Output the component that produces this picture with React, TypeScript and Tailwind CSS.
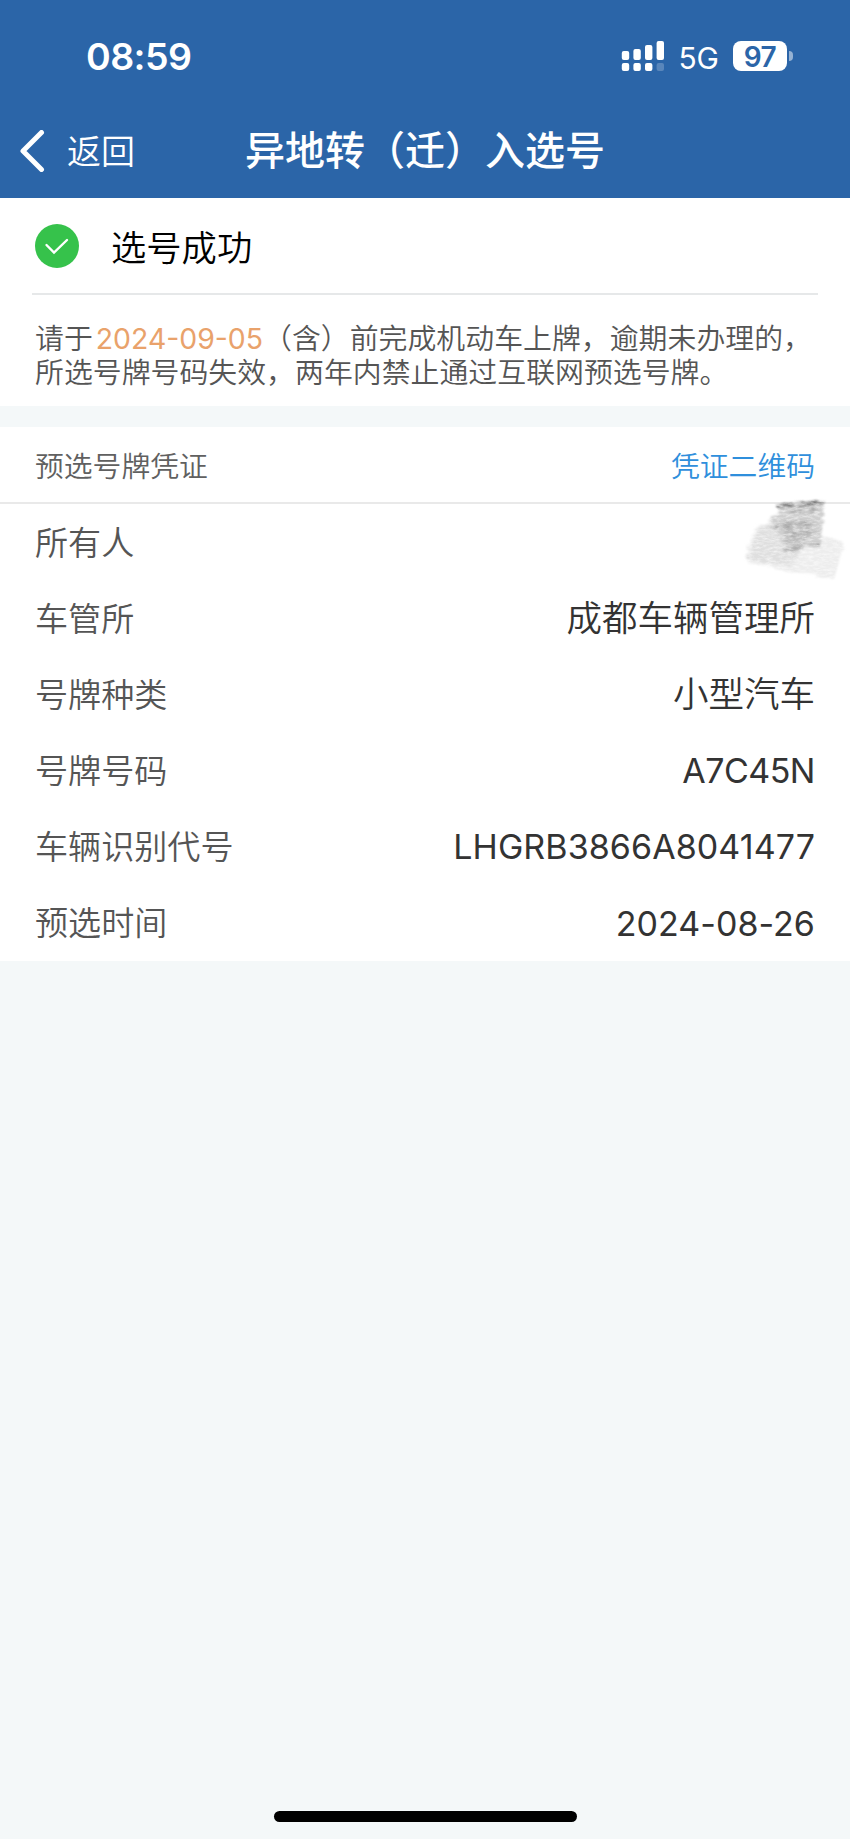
import type { ReactNode } from "react";

const rows = [
    { label: "所有人", value: "" },
    { label: "车管所", value: "成都车辆管理所" },
    { label: "号牌种类", value: "小型汽车" },
    { label: "号牌号码", value: "A7C45N", latin: "tracking-[-0.5px]" },
    { label: "车辆识别代号", value: "LHGRB3866A8041477", latin: "tracking-[0.08px]" },
    { label: "预选时间", value: "2024-08-26", latin: "tracking-[0.05px]" },
]

function StatusBar() {
    return (
        <div className="flex h-[112px] items-center justify-between pl-[86px] pr-[57px] text-white">
            <span className="mt-[2px] text-[37.5px] font-semibold leading-none tracking-[-0.6px]">08:59</span>

            <div className="flex items-center">
                <svg width="43" height="32" viewBox="0 0 43 32" fill="#fff">
                    <rect x="0.8" y="11" width="7.4" height="9" rx="2" />
                    <rect x="12.4" y="9" width="7.4" height="11" rx="2" />
                    <rect x="24" y="5" width="7.4" height="15" rx="2" />
                    <rect x="35.6" y="1" width="7.4" height="19" rx="2" />
                    <rect x="0.8" y="23" width="7.4" height="8" rx="2" />
                    <rect x="12.4" y="23" width="7.4" height="8" rx="2" />
                    <rect x="24" y="23" width="7.4" height="8" rx="2" />
                    <rect x="35.6" y="23" width="7.4" height="8" rx="2" opacity="0.22" />
                </svg>
                <span className="ml-[14px] mt-[3px] text-[30px] font-normal leading-none">5G</span>
                <span className="ml-[14px] flex h-[30px] w-[54px] items-center justify-center rounded-[8px] bg-white pt-px text-[28px] font-semibold leading-none tracking-[-0.5px] text-[#2b65a8]">97</span>
                <span className="ml-[2px] h-[10px] w-[4px] rounded-r-full bg-white/50" />
            </div>
        </div>
    )
}

function NavBar() {
    return (
        <div className="relative flex h-[77px] items-center pl-[19px] text-white">
            <svg width="27" height="42" viewBox="0 0 27 42" fill="none" stroke="#fff" strokeWidth="5" strokeLinecap="round" strokeLinejoin="round">
                <path d="M22.5 2.5 L4 21 L22.5 39.5" />
            </svg>
            <span className="ml-[21px] mt-[2px] text-[34px] leading-none">返回</span>
            <h1 className="absolute inset-x-0 text-center text-[40px] font-medium leading-none">异地转（迁）入选号</h1>
        </div>
    )
}

// Grey brush strokes that hide the owner's name
function Smudge() {
    return (
        <svg className="absolute right-0 top-[-8px]" width="110" height="92" viewBox="0 0 110 92">
            <filter id="brush" x="-10%" y="-10%" width="120%" height="120%">
                <feTurbulence type="fractalNoise" baseFrequency="0.05 0.25" numOctaves="3" seed="4" result="n" />
                <feDisplacementMap in="SourceGraphic" in2="n" scale="8" result="d" />
                <feGaussianBlur in="d" stdDeviation="1.3" result="soft" />
                <feTurbulence type="fractalNoise" baseFrequency="0.15 0.45" numOctaves="4" seed="9" />
                <feColorMatrix values="0 0 0 0 0  0 0 0 0 0  0 0 0 0 0  1.2 0 0 0 0.25" result="grain" />
                <feComposite in="soft" in2="grain" operator="in" />
            </filter>
            <g filter="url(#brush)">
                <path d="M18 30 L44 22 L80 40 L104 46 L100 62 L94 83 L58 77 L7 67 L7 50 Z" fill="#ededed" />
                <path d="M20 30 L36 22 L52 32 L64 50 L50 70 L8 64 L12 48 Z" fill="#dfdfdf" />
                <path d="M44 9 L84 6 L83 24 L81 48 L46 54 L38 38 L32 24 Z" fill="#cfcfcf" />
                <path d="M44 28 L68 22 L73 38 L60 50 L44 46 Z" fill="#bdbdbd" />
            </g>
            <g fill="none" stroke="#a0a0a0" filter="url(#brush)">
                <path d="M36 10 L62 9 L84 6" stroke="#777" strokeWidth="3" />
                <path d="M46 17 L80 14" />
                <path d="M30 31 L54 29 L74 26" strokeWidth="1.5" />
                <path d="M50 40 L80 36" />
                <path d="M43 53 L62 52 M68 49 L80 48" strokeWidth="2" />
            </g>
        </svg>
    )
}

function Row({ label, children }: { label: string, children: ReactNode }) {
    return (
        <div className="relative flex h-[76.2px] items-center justify-between px-[35px]">
            <span className="mt-[2px] text-[33.1px] leading-none text-[#555]">{label}</span>
            {children}
        </div>
    )
}

export default function App() {

    return (
        <div className="flex h-[1839px] w-[850px] flex-col overflow-hidden bg-[#f4f8f9] font-[Inter,'Noto_Sans_CJK_SC',sans-serif] font-[350]">

            <header className="h-[198px] bg-[#2b65a8]">
                <StatusBar />
                <NavBar />
            </header>

            <section className="h-[208px] bg-white">
                <div className="mx-[32px] flex h-[97px] items-center border-b-2 border-[#e6e8e9] pl-[3px]">
                    <svg width="44" height="44" viewBox="0 0 44 44" fill="none">
                        <circle cx="22" cy="22" r="22" fill="#36c24b" />
                        <path d="M11.5 21 L19 28.5 L32 16" stroke="#fff" strokeWidth="2.4" strokeLinecap="round" />
                    </svg>
                    <span className="ml-[32px] mt-[7px] text-[35.3px] leading-none text-black">选号成功</span>
                </div>
                <div className="whitespace-nowrap px-[35px] pt-[27px] text-[28.9px] leading-[33.5px] text-[#555]">
                    <p>请于<span className="ml-[3px] text-[28.4px] font-normal text-[#e9a26b]">2024-09-05</span>（含）前完成机动车上牌，逾期未办理的，</p>
                    <p>所选号牌号码失效，两年内禁止通过互联网预选号牌。</p>
                </div>
            </section>

            <section className="mt-[21px] bg-white">
                <div className="flex h-[77px] items-center justify-between border-b-2 border-[#e9e9e9] px-[35px] pt-[5px] text-[28.8px] leading-none">
                    <span className="text-[#606060]">预选号牌凭证</span>
                    <a className="text-[#2f8fdc]">凭证二维码</a>
                </div>

                {rows.map((row) => (
                    <Row key={row.label} label={row.label}>
                        {row.value === "" ? (
                            <Smudge />
                        ) : row.latin ? (
                            <span className={`mt-px text-[34px] font-normal leading-none text-[#333] ${row.latin}`}>{row.value}</span>
                        ) : (
                            <span className="mt-px text-[35.5px] leading-none text-[#333]">{row.value}</span>
                        )}
                    </Row>
                ))}
            </section>

            <div className="mx-auto mb-[17px] mt-auto h-[11px] w-[303px] rounded-full bg-black" />
        </div>
    )
}
